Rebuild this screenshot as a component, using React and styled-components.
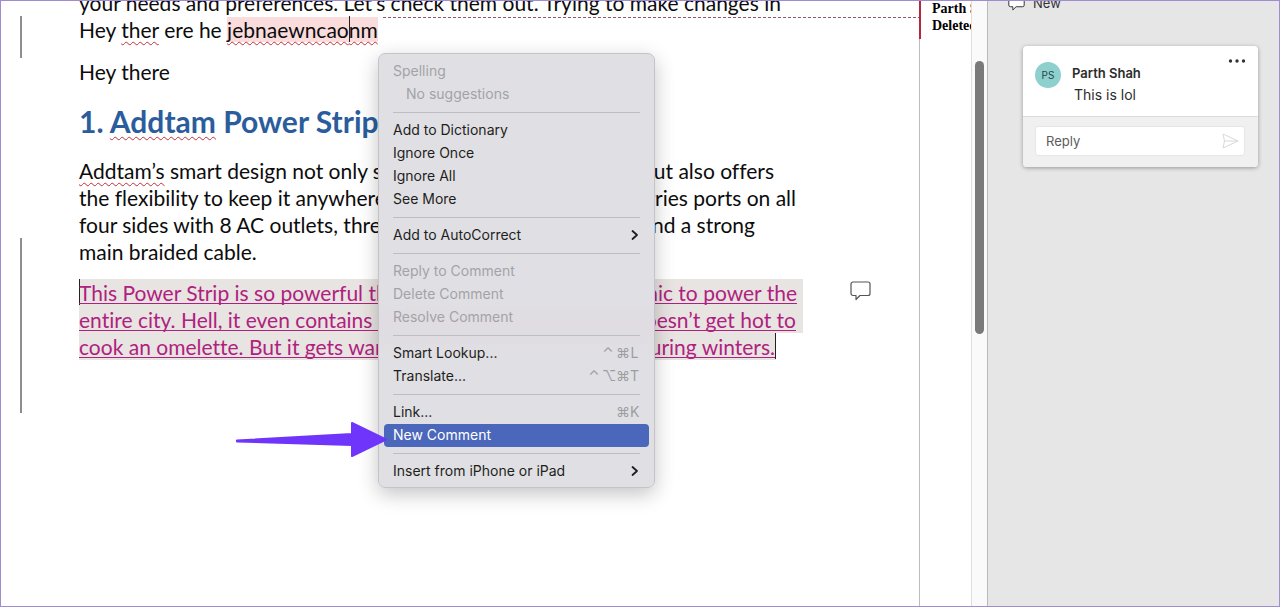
import React from "react";
import styled, { createGlobalStyle } from "styled-components";

const GlobalStyle = createGlobalStyle`
  * {
    box-sizing: border-box;
  }

  body {
    margin: 0;
    font-family: Inter, "Liberation Sans", sans-serif;
  }

  button, input {
    font: inherit;
  }
`;

const Window = styled.div`
  display: flex;
  position: relative;
  height: 100vh;
  overflow: hidden;
  background: #fff;

  &::after {
    content: "";
    position: absolute;
    inset: 0;
    border: 1px solid #a08cd0;
    pointer-events: none;
  }
`;

const Document = styled.main`
  position: relative;
  flex: 1;
  min-width: 0;
  margin-top: -11px;
  font-family: Lato, sans-serif;
  font-size: 21px;
  line-height: 27px;
  font-variant-ligatures: none;
  color: #0c0c0c;
  white-space: nowrap;
`;

const Block = styled.div`
  margin-left: 20px;
  padding-left: 57px;
  padding-bottom: ${props => props.$after || 0}px;
  border-left: 2px solid ${props => (props.$changed ? "#8e8e8e" : "transparent")};
`;

const Paragraph = styled.p`
  margin: 0;
`;

const Line = styled.span`
  display: flex;
  justify-content: space-between;
  width: ${props => props.$width}px;
`;

const Title = styled.h2`
  margin: 0;
  font-size: 30px;
  line-height: 36px;
  font-weight: 700;
  color: #2b5d9c;
`;

const Misspelled = styled.span`
  text-decoration: underline wavy #c0303a 1px;
  text-decoration-skip-ink: none;
  text-underline-offset: 3px;
`;

const TrackedRow = styled.div`
  display: flex;
  align-items: flex-start;
`;

const Deleted = styled.span`
  background: #fadcdd;
`;

const Leader = styled.span`
  flex: 1;
  height: 1px;
  margin: 1px 0 0 5px;
  background: repeating-linear-gradient(90deg, #8a5b68 0 3px, transparent 3px 5px);
`;

const Caret = styled.span`
  display: inline-block;
  width: 1px;
  height: 26px;
  margin-right: -1px;
  vertical-align: top;
  background: #222;
`;

const CommentedRow = styled.div`
  display: flex;
  align-items: flex-start;
  margin-top: 14px;
`;

const Inserted = styled.div`
  width: 724px;
  color: #b0217f;
`;

const InsertedLine = styled.div`
  display: flex;
  width: ${props => props.$width}px;
  background: #e8e4e2;
`;

const Underlined = styled.span`
  display: flex;
  justify-content: space-between;
  width: ${props => props.$width}px;
  height: 25px;
  margin-bottom: 2px;
  border-bottom: 1px solid #b0217f;
`;

const MarkerButton = styled.button`
  display: flex;
  margin: 2px 0 0 47px;
  padding: 0;
  border: 0;
  background: none;
  color: #555;
`;

const Menu = styled.div`
  position: absolute;
  top: 64px;
  left: 378px;
  width: 277px;
  padding: 6px 5px 4px;
  border: 1px solid #c4c4c8;
  border-radius: 7px;
  background: linear-gradient(#e0e0e4 0 56%, #e0dce1 62%, #e0e0e4 72%);
  box-shadow: 0 6px 20px rgba(0, 0, 0, 0.24);
  font-family: Inter, sans-serif;
  font-size: 14px;
  line-height: 22px;
`;

const MenuItem = styled.button`
  display: flex;
  align-items: center;
  justify-content: space-between;
  width: 100%;
  height: 23px;
  padding: 0 10px 1px ${props => (props.$indent ? 22 : 9)}px;
  border: 0;
  border-radius: 4px;
  background: ${props => (props.$active ? "#4b67bb" : "none")};
  color: ${props => (props.$active ? "#fff" : "#1e1e20")};
  text-align: left;

  &:disabled {
    color: #a3a3a7;
  }
`;

const Separator = styled.hr`
  height: 1px;
  margin: 6px 9px;
  border: 0;
  background: #bebec2;
`;

const Shortcut = styled.span`
  display: flex;
  gap: 2px;
  color: #9d9da1;
`;

const Key = styled.span`
  width: ${props => (props.$letter ? 9 : 12)}px;
  text-align: center;
  font-family: Inter, "DejaVu Sans", sans-serif;
`;

const Arrow = styled.svg`
  position: absolute;
  top: 420px;
  left: 234px;
`;

const Balloons = styled.aside`
  display: flex;
  flex-direction: column;
  width: 52px;
  overflow: hidden;
  font-family: "Liberation Serif", serif;
  font-size: 14px;
  line-height: 17px;
  font-weight: 700;
  white-space: nowrap;
`;

const Balloon = styled.div`
  height: 39px;
  padding-left: 11px;
  border-left: 2px solid #b5283c;
`;

const BalloonGutter = styled.div`
  flex: 1;
  border-left: 1px solid #bdbdbd;
`;

const ScrollTrack = styled.div`
  width: 17px;
  padding: 61px 3px 0;
  border-left: 1px solid #dedede;
  border-right: 1px solid #b9b9b9;
  background: #fafafa;
`;

const ScrollThumb = styled.div`
  height: 273px;
  width: 9px;
  border-radius: 5px;
  background: #7a7a7a;
`;

const Sidebar = styled.aside`
  width: 292px;
  padding: 0 22px 0 20px;
  background: #e6e6e6;
  font-size: 13px;
`;

const NewButton = styled.button`
  display: flex;
  align-items: center;
  gap: 8px;
  height: 20px;
  margin-top: -7px;
  padding: 0;
  border: 0;
  background: none;
  color: #333;
`;

const Card = styled.article`
  margin: 33px 0 0 15px;
  border-radius: 4px;
  background: #fff;
  box-shadow: 0 1px 4px rgba(0, 0, 0, 0.35);
  overflow: hidden;
`;

const CardHeader = styled.header`
  display: flex;
  align-items: flex-start;
  height: 71px;
  padding: 16px 12px 0;
  border-bottom: 1px solid #dcdcdc;
`;

const Avatar = styled.span`
  width: 26px;
  height: 26px;
  border-radius: 50%;
  background: #8dd0cd;
  color: #24484a;
  font-size: 10px;
  line-height: 26px;
  text-align: center;
`;

const Message = styled.div`
  flex: 1;
  padding-top: 1px;
  margin-left: 11px;
  color: #2c2c2c;
  line-height: 21px;
`;

const Author = styled.div`
  font-weight: 600;
`;

const Body = styled.div`
  padding-left: 2px;
  font-size: 14px;
`;

const MoreButton = styled.button`
  display: flex;
  margin-top: -4px;
  padding: 0;
  border: 0;
  background: none;
  color: #333;
`;

const ReplyBar = styled.form`
  padding: 9px 13px 11px 12px;
  background: #f0f0f0;
`;

const ReplyField = styled.div`
  display: flex;
  align-items: center;
  height: 30px;
  padding: 0 5px 0 10px;
  border: 1px solid #e6e6e6;
  border-radius: 3px;
  background: #fff;
`;

const ReplyInput = styled.input`
  flex: 1;
  min-width: 0;
  padding: 0;
  border: 0;
  outline: 0;
  background: none;

  &::placeholder {
    color: #5c5c5c;
    opacity: 1;
  }
`;

const SendButton = styled.button`
  display: flex;
  padding: 0;
  border: 0;
  background: none;
  color: #d9d9d9;
`;

const BubbleIcon = ({ width = 21, fill = "none" }) => (
  <svg width={width} viewBox="0 0 21 20" fill={fill} stroke="currentColor" strokeWidth="1.2" strokeLinejoin="round">
    <path d="M3 1h15a2 2 0 0 1 2 2v9.500a2 2 0 0 1-2 2H10L6 18.500v-4H3a2 2 0 0 1-2-2V3a2 2 0 0 1 2-2z" />
  </svg>
);

const Chevron = () => (
  <svg width="8" height="12" viewBox="0 0 8 12" fill="none" stroke="currentColor" strokeWidth="1.800" strokeLinecap="round" strokeLinejoin="round">
    <path d="M1.500 2l4.500 4-4.500 4" />
  </svg>
);

const menuGroups = [
  [
    { label: "Spelling", disabled: true },
    { label: "No suggestions", disabled: true, indent: true }
  ],
  [
    { label: "Add to Dictionary" },
    { label: "Ignore Once" },
    { label: "Ignore All" },
    { label: "See More" }
  ],
  [{ label: "Add to AutoCorrect", submenu: true }],
  [
    { label: "Reply to Comment", disabled: true },
    { label: "Delete Comment", disabled: true },
    { label: "Resolve Comment", disabled: true }
  ],
  [
    { label: "Smart Lookup...", keys: ["⌃", "⌘", "L"] },
    { label: "Translate...", keys: ["⌃", "⌥", "⌘", "T"] }
  ],
  [
    { label: "Link...", keys: ["⌘", "K"] },
    { label: "New Comment", active: true }
  ],
  [{ label: "Insert from iPhone or iPad", submenu: true }]
];

const ContextMenu = () => (
  <Menu role="menu">
    {menuGroups.map((group, index) => (
      <React.Fragment key={index}>
        {index > 0 && <Separator />}
        {group.map(item => (
          <MenuItem
            key={item.label}
            type="button"
            role="menuitem"
            disabled={item.disabled}
            $indent={item.indent}
            $active={item.active}
          >
            {item.label}
            {item.submenu && <Chevron />}
            {item.keys && (
              <Shortcut>
                {item.keys.map(key => (
                  <Key key={key} $letter={/[A-Z]/.test(key)}>
                    {key}
                  </Key>
                ))}
              </Shortcut>
            )}
          </MenuItem>
        ))}
      </React.Fragment>
    ))}
  </Menu>
);

const CommentCard = () => (
  <Card>
    <CardHeader>
      <Avatar>PS</Avatar>
      <Message>
        <Author>Parth Shah</Author>
        <Body>This is lol</Body>
      </Message>
      <MoreButton type="button" aria-label="More actions">
        <svg width="18" height="6" viewBox="0 0 18 6" fill="currentColor">
          <circle cx="2.500" cy="3" r="1.700" />
          <circle cx="9" cy="3" r="1.700" />
          <circle cx="15.500" cy="3" r="1.700" />
        </svg>
      </MoreButton>
    </CardHeader>
    <ReplyBar>
      <ReplyField>
        <ReplyInput type="text" placeholder="Reply" aria-label="Reply" />
        <SendButton type="button" aria-label="Send">
          <svg width="17" height="16" viewBox="0 0 17 16" fill="none" stroke="currentColor" strokeLinejoin="round">
            <path d="M1 1l15 7-15 7 1.500-7zM2.500 8H16" />
          </svg>
        </SendButton>
      </ReplyField>
    </ReplyBar>
  </Card>
);

const App = () => {
  return (
    <>
      <GlobalStyle />
      <Window>
        <Document>
          <Block>
            <Line $width={703}>your needs and preferences. Let’s check them out. Trying to make changes in</Line>
          </Block>
          <Block $changed $after={15}>
            <TrackedRow>
              <span>
                Hey <Misspelled>ther</Misspelled> ere he{" "}
                <Deleted>
                  <Misspelled>jebnaewncao</Misspelled>
                  <Caret />
                  <Misspelled>nm</Misspelled>
                </Deleted>
              </span>
              <Leader />
            </TrackedRow>
          </Block>
          <Block $after={18}>
            <Paragraph>Hey there</Paragraph>
          </Block>
          <Block $after={18}>
            <Title>
              1. <Misspelled>Addtam</Misspelled> Power Strip
            </Title>
          </Block>
          <Block>
            <Paragraph>
              <Line $width={695}>
                <span>
                  <Misspelled>Addtam’s</Misspelled> smart design not only sits
                </span>
                <span>but also offers</span>
              </Line>
              <Line $width={717}>
                <span>the flexibility to keep it anywhere</span>
                <span>carries ports on all</span>
              </Line>
              <Line $width={676}>
                <span>four sides with 8 AC outlets, three</span>
                <span>and a strong</span>
              </Line>
            </Paragraph>
          </Block>
          <Block $changed $after={53}>
            <Paragraph>main braided cable.</Paragraph>
            <CommentedRow>
              <Inserted>
                <InsertedLine $width={724}>
                  <Caret />
                  <Underlined $width={718}>
                    <span>This Power Strip is so powerful that</span>
                    <span>panic to power the</span>
                  </Underlined>
                </InsertedLine>
                <InsertedLine $width={724}>
                  <Underlined $width={717}>
                    <span>entire city. Hell, it even contains the</span>
                    <span>doesn’t get hot to</span>
                  </Underlined>
                </InsertedLine>
                <InsertedLine $width={697}>
                  <Underlined $width={696}>
                    <span>cook an omelette. But it gets warm</span>
                    <span>during winters.</span>
                  </Underlined>
                  <Caret />
                </InsertedLine>
              </Inserted>
              <MarkerButton type="button" aria-label="Show comment">
                <BubbleIcon />
              </MarkerButton>
            </CommentedRow>
          </Block>
          <ContextMenu />
        </Document>
        <Balloons>
          <Balloon>
            <div>Parth Shah</div>
            <div>Deleted:</div>
          </Balloon>
          <BalloonGutter />
        </Balloons>
        <ScrollTrack>
          <ScrollThumb />
        </ScrollTrack>
        <Sidebar>
          <NewButton type="button">
            <BubbleIcon width={17} fill="#fff" />
            New
          </NewButton>
          <CommentCard />
        </Sidebar>
        <Arrow width="154" height="40" viewBox="0 0 154 40" fill="#6f35fb" stroke="#6f35fb" strokeLinejoin="round" strokeWidth="2">
          <path d="M3 20.500L118 14V3l34 16.500L118 36V25L3 21.500z" />
        </Arrow>
      </Window>
    </>
  );
};

export default App;
